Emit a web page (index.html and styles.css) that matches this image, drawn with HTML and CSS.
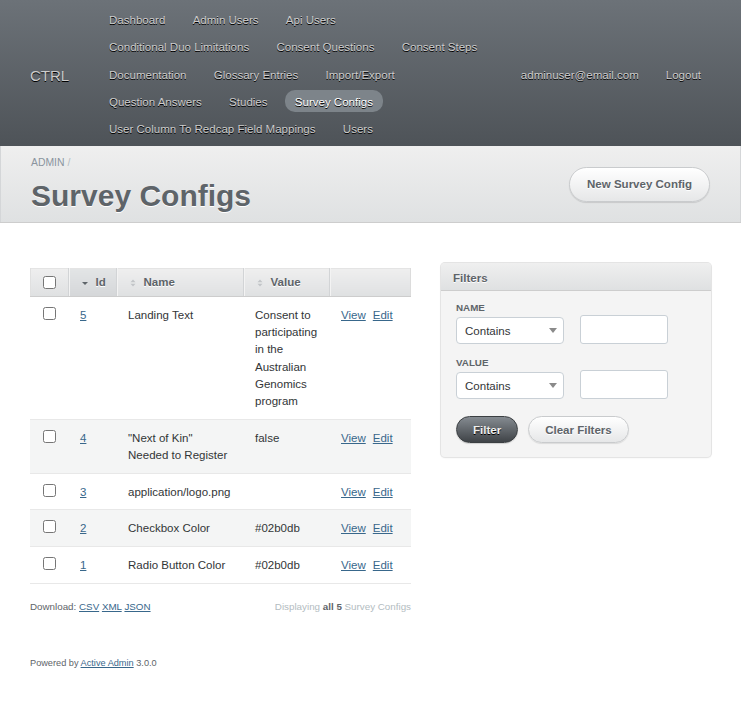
FILE: index.html
```html
<!DOCTYPE html>
<html lang="en">
<head>
<meta charset="utf-8">
<title>Survey Configs | CTRL</title>
<link rel="stylesheet" href="styles.css">
</head>
<body>
<div class="header">
  <h1 class="site-title">CTRL</h1>
  <ul class="tabs">
    <li><a href="#">Dashboard</a></li>
    <li><a href="#">Admin Users</a></li>
    <li><a href="#">Api Users</a></li>
    <li><a href="#">Conditional Duo Limitations</a></li>
    <li><a href="#">Consent Questions</a></li>
    <li><a href="#">Consent Steps</a></li>
    <li><a href="#">Documentation</a></li>
    <li><a href="#">Glossary Entries</a></li>
    <li><a href="#">Import/Export</a></li>
    <li><a href="#">Question Answers</a></li>
    <li><a href="#">Studies</a></li>
    <li class="current"><a href="#">Survey Configs</a></li>
    <li><a href="#">User Column To Redcap Field Mappings</a></li>
    <li><a href="#">Users</a></li>
  </ul>
  <ul class="utility-nav">
    <li><a href="#">adminuser@email.com</a></li>
    <li><a href="#">Logout</a></li>
  </ul>
</div>

<div class="title-bar">
  <div class="title-left">
    <div class="breadcrumbs">ADMIN <span class="sep">/</span></div>
    <h2 class="page-title">Survey Configs</h2>
  </div>
  <a class="action-btn" href="#">New Survey Config</a>
</div>

<div class="content">
  <div class="main">
    <table class="index-table">
      <colgroup>
        <col class="c-check"><col class="c-id"><col class="c-name"><col class="c-value"><col class="c-actions">
      </colgroup>
      <thead>
        <tr>
          <th class="col-check"><input type="checkbox"></th>
          <th class="sorted"><span class="th-label"><svg class="sort-icon" width="6" height="8" viewBox="0 0 6 8"><path d="M0 3h6L3 6z" fill="#5e6469"/></svg>Id</span></th>
          <th><span class="th-label"><svg class="sort-icon" width="6" height="8" viewBox="0 0 6 8"><path d="M0.5 3.2L3 0.5l2.5 2.7z M0.5 4.8h5L3 7.5z" fill="#c2c5c8"/></svg>Name</span></th>
          <th><span class="th-label"><svg class="sort-icon" width="6" height="8" viewBox="0 0 6 8"><path d="M0.5 3.2L3 0.5l2.5 2.7z M0.5 4.8h5L3 7.5z" fill="#c2c5c8"/></svg>Value</span></th>
          <th></th>
        </tr>
      </thead>
      <tbody>
        <tr>
          <td><input type="checkbox"></td>
          <td><a href="#">5</a></td>
          <td>Landing Text</td>
          <td>Consent to participating in the Australian Genomics program</td>
          <td class="actions"><a href="#">View</a><a href="#">Edit</a></td>
        </tr>
        <tr class="even">
          <td><input type="checkbox"></td>
          <td><a href="#">4</a></td>
          <td>"Next of Kin" Needed to Register</td>
          <td>false</td>
          <td class="actions"><a href="#">View</a><a href="#">Edit</a></td>
        </tr>
        <tr>
          <td><input type="checkbox"></td>
          <td><a href="#">3</a></td>
          <td>application/logo.png</td>
          <td></td>
          <td class="actions"><a href="#">View</a><a href="#">Edit</a></td>
        </tr>
        <tr class="even">
          <td><input type="checkbox"></td>
          <td><a href="#">2</a></td>
          <td>Checkbox Color</td>
          <td>#02b0db</td>
          <td class="actions"><a href="#">View</a><a href="#">Edit</a></td>
        </tr>
        <tr>
          <td><input type="checkbox"></td>
          <td><a href="#">1</a></td>
          <td>Radio Button Color</td>
          <td>#02b0db</td>
          <td class="actions"><a href="#">View</a><a href="#">Edit</a></td>
        </tr>
      </tbody>
    </table>
    <div class="index-footer">
      <div class="downloads">Download: <a href="#">CSV</a> <a href="#">XML</a> <a href="#">JSON</a></div>
      <div class="pagination-info">Displaying <b>all 5</b> Survey Configs</div>
    </div>
  </div>

  <div class="sidebar">
    <div class="panel">
      <h3 class="panel-title">Filters</h3>
      <form class="panel-body">
        <div class="filter">
          <label class="filter-label">Name</label>
          <div class="filter-row">
            <div class="select-wrap">
              <select class="select"><option>Contains</option></select>
              <svg class="select-arrow" width="8" height="5" viewBox="0 0 8 5"><path d="M0 0h8L4 5z" fill="#8a8a8a"/></svg>
            </div>
            <input class="text-input" type="text">
          </div>
        </div>
        <div class="filter">
          <label class="filter-label">Value</label>
          <div class="filter-row">
            <div class="select-wrap">
              <select class="select"><option>Contains</option></select>
              <svg class="select-arrow" width="8" height="5" viewBox="0 0 8 5"><path d="M0 0h8L4 5z" fill="#8a8a8a"/></svg>
            </div>
            <input class="text-input" type="text">
          </div>
        </div>
        <div class="buttons">
          <button type="button" class="btn btn-dark">Filter</button>
          <button type="button" class="btn btn-light">Clear Filters</button>
        </div>
      </form>
    </div>
  </div>
</div>

<div class="footer">Powered by <a href="#">Active Admin</a> 3.0.0</div>
</body>
</html>
```

FILE: styles.css
```css
body {
  margin: 0;
  font-family: "Liberation Sans", Arial, Helvetica, sans-serif;
  font-size: 11.52px;
  line-height: 1.5;
  color: #323537;
  background: #fff;
}

/* Header */
.header {
  display: flex;
  align-items: center;
  padding: 8px 0 7px;
  background: linear-gradient(#6c7278, #4e5358);
  text-shadow: 0 1px 0 #000;
}
.site-title {
  flex: 0 0 99px;
  box-sizing: border-box;
  margin: 0;
  padding: 3px 0 0 30px;
  font-size: 15px;
  font-weight: normal;
  line-height: 1;
  color: #cdcdcd;
}
.tabs {
  flex: 0 0 400px;
  display: flex;
  flex-wrap: wrap;
  column-gap: 7.3px;
  row-gap: 5.25px;
  list-style: none;
  margin: 0;
  padding: 0;
}
.tabs a,
.utility-nav a {
  display: block;
  padding: 6px 10px 4px;
  line-height: 12px;
  border-radius: 10px;
  color: #cdcdcd;
  text-decoration: none;
}
.tabs .current a {
  background: #7d848a;
  color: #fff;
}
.utility-nav {
  display: flex;
  gap: 7px;
  list-style: none;
  margin: 0 30px 0 auto;
  padding: 0;
}

/* Title bar */
.title-bar {
  display: flex;
  justify-content: space-between;
  align-items: center;
  padding: 9px 30px 11px 31px;
  background: linear-gradient(#efefef, #dfe1e2);
  border-bottom: 1px solid #cdcdcd;
  box-shadow: inset 1px 0 0 #d4d6d8, inset -1px 0 0 #d4d6d8;
}
.breadcrumbs {
  font-size: 10.4px;
  line-height: 15px;
  color: #8a949e;
  margin-bottom: 11px;
}
.breadcrumbs .sep {
  color: #b3bcc1;
}
.page-title {
  margin: 0;
  font-size: 30px;
  line-height: 30px;
  font-weight: bold;
  color: #5e6469;
  text-shadow: 0 1px 0 #fff;
}
.action-btn {
  display: block;
  margin: 2px 1px 0 0;
  padding: 10px 17px;
  line-height: 13px;
  font-weight: bold;
  color: #5e6469;
  text-decoration: none;
  text-shadow: 0 1px 0 #fff;
  border: 1px solid #c9cbcd;
  border-radius: 200px;
  background: linear-gradient(#ffffff, #e6e7e8);
  box-shadow: 0 1px 1px rgba(0, 0, 0, 0.12), inset 0 1px 0 #fff;
}

/* Content */
.content {
  display: flex;
  align-items: flex-start;
  gap: 30px;
  padding: 40px 30px 30px;
}
.main {
  flex: 1;
  min-width: 0;
}
.sidebar {
  flex: 0 0 270px;
}

/* Table */
.index-table {
  width: 100%;
  margin-top: 5px;
  border-collapse: collapse;
  table-layout: fixed;
}
.c-check { width: 38px; }
.c-id { width: 48px; }
.c-name { width: 127px; }
.c-value { width: 86px; }
.c-actions { width: 82px; }

.index-table th {
  padding: 6px 12px 4px;
  text-align: left;
  font-weight: bold;
  color: #5e6469;
  text-shadow: 0 1px 0 #fff;
  white-space: nowrap;
  background: linear-gradient(#efefef, #dfe1e2);
  border-bottom: 1px solid #cdcdcd;
  border-right: 1px solid #d2d4d6;
  box-shadow: inset 1px 0 0 #f3f3f3, inset 0 1px 0 #e4e4e4;
}
.index-table th:first-child {
  box-shadow: inset 1px 0 0 #e0e0e0, inset 0 1px 0 #e4e4e4;
}
.index-table th:last-child {
  border-right: 0;
  box-shadow: inset -1px 0 0 #dcdcdc, inset 1px 0 0 #f3f3f3, inset 0 1px 0 #e4e4e4;
}
.index-table th.sorted {
  background: linear-gradient(#e3e5e6, #d5d7d9);
}
.th-label {
  display: inline-flex;
  align-items: center;
}
.sort-icon {
  margin: 0 8px 0 1px;
}
.index-table input[type="checkbox"] {
  display: block;
  width: 13px;
  height: 13px;
  margin: 0 0 0 1px;
}
.index-table td {
  padding: 10px 12px 8.4px;
  vertical-align: top;
  border-bottom: 1px solid #e8e8e8;
}
.index-table tr.even td {
  background: #f4f5f5;
}
.index-table a {
  color: #38678b;
}
.actions {
  white-space: nowrap;
}
.actions a + a {
  margin-left: 7px;
}

.index-footer {
  display: flex;
  justify-content: space-between;
  margin-top: 15px;
  font-size: 9.8px;
  line-height: 15px;
}
.downloads {
  color: #5e6469;
}
.downloads a {
  color: #38678b;
}
.pagination-info {
  color: #b3bcc1;
}
.pagination-info b {
  color: #5e6469;
}

/* Sidebar panel */
.panel {
  background: #f4f4f4;
  border-radius: 4px;
  box-shadow: 0 0 0 1px #e4e4e4, 0 1px 2px rgba(0, 0, 0, 0.08);
}
.panel-title {
  margin: 0;
  padding: 6px 12px 3px;
  font-size: 11.52px;
  line-height: 18px;
  font-weight: bold;
  color: #5e6469;
  text-shadow: 0 1px 0 #fff;
  background: linear-gradient(#efefef, #dfe1e2);
  border-bottom: 1px solid #cdcdcd;
  border-radius: 4px 4px 0 0;
}
.panel-body {
  margin: 0;
  padding: 9px 15px 14px;
}
.filter + .filter {
  margin-top: 11px;
}
.filter-label {
  display: block;
  font-size: 9.8px;
  line-height: 15px;
  font-weight: bold;
  text-transform: uppercase;
  color: #5e6469;
}
.filter-row {
  display: flex;
  align-items: flex-end;
  gap: 16px;
}
.select-wrap {
  position: relative;
  width: 108px;
  height: 27px;
}
.select {
  display: block;
  width: 108px;
  height: 27px;
  box-sizing: border-box;
  margin: 0;
  padding: 0 20px 0 8px;
  font-family: inherit;
  font-size: 11.52px;
  color: #323537;
  background: #fff;
  border: 1px solid #c9d0d6;
  border-radius: 4px;
  appearance: none;
  -webkit-appearance: none;
}
.select-arrow {
  position: absolute;
  right: 7px;
  top: 11px;
  pointer-events: none;
}
.text-input {
  display: block;
  width: 88px;
  height: 29px;
  box-sizing: border-box;
  margin: 0;
  padding: 0 6px;
  background: #fff;
  border: 1px solid #c9d0d6;
  border-radius: 3px;
}
.buttons {
  display: flex;
  gap: 10px;
  margin-top: 17px;
}
.btn {
  margin: 0;
  padding: 7px 16px 6px;
  font-family: inherit;
  font-size: 11.52px;
  line-height: 12px;
  font-weight: bold;
  border-radius: 200px;
  cursor: pointer;
}
.btn-dark {
  color: #efefef;
  text-shadow: 0 1px 0 #000;
  background: linear-gradient(#858b91, #3f4347);
  border: 1px solid #3b3f42;
  box-shadow: 0 1px 1px rgba(0, 0, 0, 0.15);
}
.btn-light {
  color: #5e6469;
  text-shadow: 0 1px 0 #fff;
  background: linear-gradient(#ffffff, #e6e7e8);
  border: 1px solid #c9cbcd;
  box-shadow: 0 1px 1px rgba(0, 0, 0, 0.1);
}

/* Footer */
.footer {
  padding: 12px 30px 13px;
  font-size: 9.2px;
  line-height: 14px;
  color: #5e6469;
}
.footer a {
  color: #38678b;
}
```
